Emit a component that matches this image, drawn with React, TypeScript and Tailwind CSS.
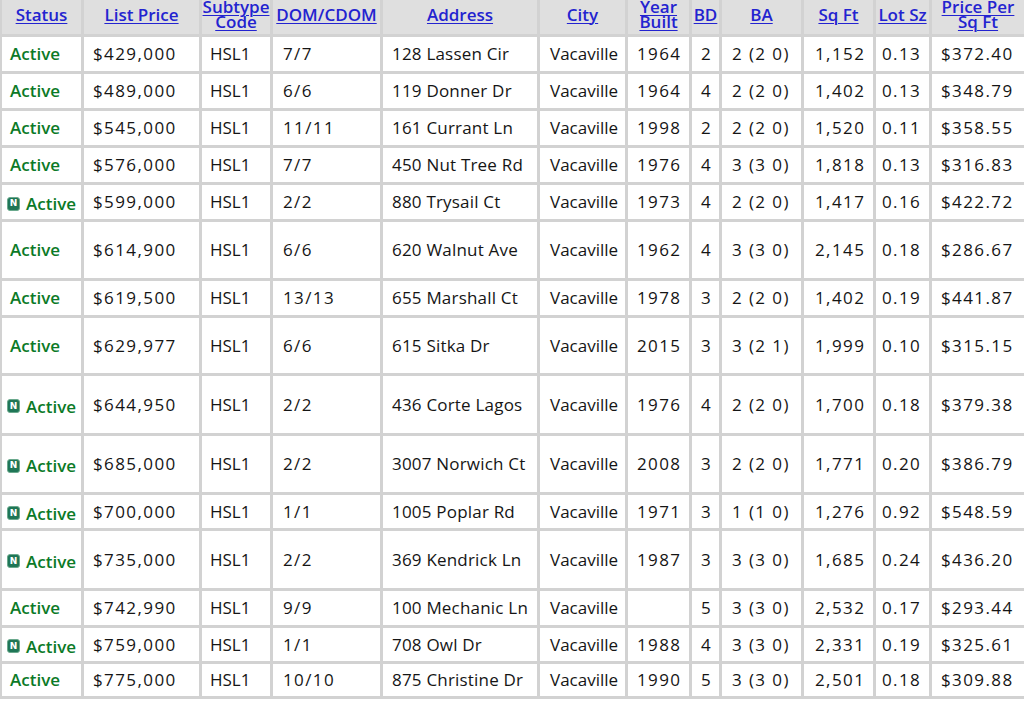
import React from 'react';

type Listing = {
  isNew: boolean;
  price: string;
  dom: string;
  address: string;
  year: string;
  bd: string;
  ba: string;
  sqft: string;
  lot: string;
  ppsf: string;
  h: string;
};

const listings: Listing[] = [
  { isNew: false, price: '$429,000', dom: '7/7', address: '128 Lassen Cir', year: '1964', bd: '2', ba: '2 (2 0)', sqft: '1,152', lot: '0.13', ppsf: '$372.40', h: 'h-[34px]' },
  { isNew: false, price: '$489,000', dom: '6/6', address: '119 Donner Dr', year: '1964', bd: '4', ba: '2 (2 0)', sqft: '1,402', lot: '0.13', ppsf: '$348.79', h: 'h-[34px]' },
  { isNew: false, price: '$545,000', dom: '11/11', address: '161 Currant Ln', year: '1998', bd: '2', ba: '2 (2 0)', sqft: '1,520', lot: '0.11', ppsf: '$358.55', h: 'h-[34px]' },
  { isNew: false, price: '$576,000', dom: '7/7', address: '450 Nut Tree Rd', year: '1976', bd: '4', ba: '3 (3 0)', sqft: '1,818', lot: '0.13', ppsf: '$316.83', h: 'h-[34px]' },
  { isNew: true, price: '$599,000', dom: '2/2', address: '880 Trysail Ct', year: '1973', bd: '4', ba: '2 (2 0)', sqft: '1,417', lot: '0.16', ppsf: '$422.72', h: 'h-[34px]' },
  { isNew: false, price: '$614,900', dom: '6/6', address: '620 Walnut Ave', year: '1962', bd: '4', ba: '3 (3 0)', sqft: '2,145', lot: '0.18', ppsf: '$286.67', h: 'h-[56px]' },
  { isNew: false, price: '$619,500', dom: '13/13', address: '655 Marshall Ct', year: '1978', bd: '3', ba: '2 (2 0)', sqft: '1,402', lot: '0.19', ppsf: '$441.87', h: 'h-[34px]' },
  { isNew: false, price: '$629,977', dom: '6/6', address: '615 Sitka Dr', year: '2015', bd: '3', ba: '3 (2 1)', sqft: '1,999', lot: '0.10', ppsf: '$315.15', h: 'h-[55px]' },
  { isNew: true, price: '$644,950', dom: '2/2', address: '436 Corte Lagos', year: '1976', bd: '4', ba: '2 (2 0)', sqft: '1,700', lot: '0.18', ppsf: '$379.38', h: 'h-[57px]' },
  { isNew: true, price: '$685,000', dom: '2/2', address: '3007 Norwich Ct', year: '2008', bd: '3', ba: '2 (2 0)', sqft: '1,771', lot: '0.20', ppsf: '$386.79', h: 'h-[56px]' },
  { isNew: true, price: '$700,000', dom: '1/1', address: '1005 Poplar Rd', year: '1971', bd: '3', ba: '1 (1 0)', sqft: '1,276', lot: '0.92', ppsf: '$548.59', h: 'h-[33px]' },
  { isNew: true, price: '$735,000', dom: '2/2', address: '369 Kendrick Ln', year: '1987', bd: '3', ba: '3 (3 0)', sqft: '1,685', lot: '0.24', ppsf: '$436.20', h: 'h-[57px]' },
  { isNew: false, price: '$742,990', dom: '9/9', address: '100 Mechanic Ln', year: '', bd: '5', ba: '3 (3 0)', sqft: '2,532', lot: '0.17', ppsf: '$293.44', h: 'h-[34px]' },
  { isNew: true, price: '$759,000', dom: '1/1', address: '708 Owl Dr', year: '1988', bd: '4', ba: '3 (3 0)', sqft: '2,331', lot: '0.19', ppsf: '$325.61', h: 'h-[33px]' },
  { isNew: false, price: '$775,000', dom: '10/10', address: '875 Christine Dr', year: '1990', bd: '5', ba: '3 (3 0)', sqft: '2,501', lot: '0.18', ppsf: '$309.88', h: 'h-[32px]' },
];

const headers: { label: string[]; w: string }[] = [
  { label: ['Status'], w: 'w-[79px]' },
  { label: ['List Price'], w: 'w-[115px]' },
  { label: ['Subtype', 'Code'], w: 'w-[68px]' },
  { label: ['DOM/CDOM'], w: 'w-[107px]' },
  { label: ['Address'], w: 'w-[154px]' },
  { label: ['City'], w: 'w-[85px]' },
  { label: ['Year', 'Built'], w: 'w-[61px]' },
  { label: ['BD'], w: 'w-[27px]' },
  { label: ['BA'], w: 'w-[79px]' },
  { label: ['Sq Ft'], w: 'w-[69px]' },
  { label: ['Lot Sz'], w: 'w-[53px]' },
  { label: ['Price Per', 'Sq Ft'], w: 'w-[92px]' },
];

function NewBadge() {
  return (
    <span className="inline-flex items-center justify-center w-[13px] h-[14px] rounded-[3px] bg-[#1f7656] border border-[#6aa98d] text-white text-[9px] font-bold leading-none font-['DejaVu_Sans',sans-serif]">
      N
    </span>
  );
}

const num = 'tracking-[1.4px]';

export default function App() {
  return (
    <div className="w-[1024px] h-[702px] overflow-hidden bg-white font-['Open_Sans',sans-serif] text-[17px] text-[#151515]">
      <table className="table-fixed border-separate border-spacing-[3px] bg-[#d2d2d2] w-[1028px] -ml-px -mt-[9px]">
        <thead>
          <tr>
            {headers.map((h) => (
              <th
                key={h.label.join(' ')}
                className={`${h.w} h-[40px] p-0 bg-[#dfdfdf] text-center align-middle font-semibold text-[#2323d0] leading-[15px]`}
              >
                <a className="underline underline-offset-2 decoration-1 cursor-pointer">
                  {h.label.map((l) => (
                    <span key={l} className="block">
                      {l}
                    </span>
                  ))}
                </a>
              </th>
            ))}
          </tr>
        </thead>
        <tbody>
          {listings.map((r) => (
            <tr key={r.address} className="bg-white">
              <td className={`${r.h} bg-white align-middle whitespace-nowrap ${r.isNew ? 'pl-[5px]' : 'pl-[8px]'}`}>
                <span className="inline-flex items-center gap-[6px] font-semibold text-[#0b7a27]">
                  {r.isNew && <NewBadge />}
                  Active
                </span>
              </td>
              <td className={`bg-white pl-[9px] whitespace-nowrap ${num}`}>{r.price}</td>
              <td className="bg-white pl-[8px] whitespace-nowrap">HSL1</td>
              <td className={`bg-white pl-[10px] whitespace-nowrap ${num}`}>{r.dom}</td>
              <td className="bg-white pl-[9px] whitespace-nowrap tracking-[0.2px]">{r.address}</td>
              <td className="bg-white pl-[10px] whitespace-nowrap">Vacaville</td>
              <td className={`bg-white pl-[9px] whitespace-nowrap ${num}`}>{r.year}</td>
              <td className="bg-white pl-[9px] whitespace-nowrap">{r.bd}</td>
              <td className={`bg-white pl-[10px] whitespace-nowrap ${num}`}>{r.ba}</td>
              <td className={`bg-white pl-[11px] whitespace-nowrap ${num}`}>{r.sqft}</td>
              <td className={`bg-white pl-[6px] whitespace-nowrap ${num}`}>{r.lot}</td>
              <td className={`bg-white pl-[9px] whitespace-nowrap ${num}`}>{r.ppsf}</td>
            </tr>
          ))}
        </tbody>
      </table>
    </div>
  );
}
